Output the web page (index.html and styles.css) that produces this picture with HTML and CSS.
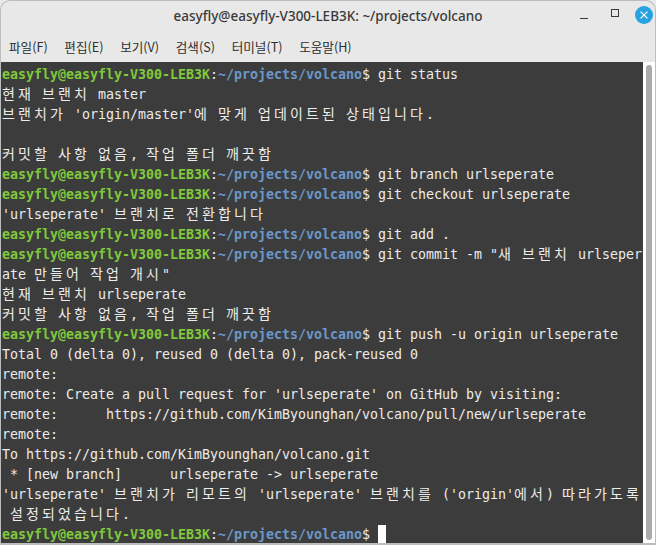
FILE: index.html
```html
<!DOCTYPE html>
<html lang="ko">
<head>
<meta charset="utf-8">
<title>Terminal</title>
<link rel="stylesheet" href="styles.css">
</head>
<body>
<div class="window">
  <header class="titlebar">
    <div class="title">easyfly@easyfly-V300-LEB3K: ~/projects/volcano</div>
    <div class="controls">
      <svg class="ctl" width="18" height="18" viewBox="0 0 18 18"><path d="M1 12.5H9" stroke="#3a3a3a" stroke-width="1" fill="none"/></svg>
      <svg class="ctl" width="18" height="18" viewBox="0 0 18 18"><rect x="4.5" y="3.5" width="7" height="7" stroke="#3a3a3a" stroke-width="1" fill="none"/></svg>
      <svg class="ctl" width="18" height="18" viewBox="0 0 18 18"><circle cx="9" cy="9" r="9" fill="#27a2e0"/><path d="M5.6 5.6L12.4 12.4M12.4 5.6L5.6 12.4" stroke="#fff" stroke-width="1.3" fill="none"/></svg>
    </div>
  </header>
  <nav class="menubar">
    <span class="menu">파일(F)</span>
    <span class="menu">편집(E)</span>
    <span class="menu">보기(V)</span>
    <span class="menu">검색(S)</span>
    <span class="menu">터미널(T)</span>
    <span class="menu">도움말(H)</span>
  </nav>
  <div class="body">
    <main class="term">
      <div class="row"><span class="u">easyfly@easyfly-V300-LEB3K</span>:<span class="d">~/projects/volcano</span>$ git status</div>
      <div class="row"><span class="k">현재</span> <span class="k">브랜치</span> master</div>
      <div class="row"><span class="k">브랜치가</span> 'origin/master'<span class="k">에</span> <span class="k">맞게</span> <span class="k">업데이트된</span> <span class="k">상태입니다</span>.</div>
      <div class="row"></div>
      <div class="row"><span class="k">커밋할</span> <span class="k">사항</span> <span class="k">없음</span>, <span class="k">작업</span> <span class="k">폴더</span> <span class="k">깨끗함</span></div>
      <div class="row"><span class="u">easyfly@easyfly-V300-LEB3K</span>:<span class="d">~/projects/volcano</span>$ git branch urlseperate</div>
      <div class="row"><span class="u">easyfly@easyfly-V300-LEB3K</span>:<span class="d">~/projects/volcano</span>$ git checkout urlseperate</div>
      <div class="row">'urlseperate' <span class="k">브랜치로</span> <span class="k">전환합니다</span></div>
      <div class="row"><span class="u">easyfly@easyfly-V300-LEB3K</span>:<span class="d">~/projects/volcano</span>$ git add .</div>
      <div class="row"><span class="u">easyfly@easyfly-V300-LEB3K</span>:<span class="d">~/projects/volcano</span>$ git commit -m "<span class="k">새</span> <span class="k">브랜치</span> urlseper</div>
      <div class="row">ate <span class="k">만들어</span> <span class="k">작업</span> <span class="k">개시</span>"</div>
      <div class="row"><span class="k">현재</span> <span class="k">브랜치</span> urlseperate</div>
      <div class="row"><span class="k">커밋할</span> <span class="k">사항</span> <span class="k">없음</span>, <span class="k">작업</span> <span class="k">폴더</span> <span class="k">깨끗함</span></div>
      <div class="row"><span class="u">easyfly@easyfly-V300-LEB3K</span>:<span class="d">~/projects/volcano</span>$ git push -u origin urlseperate</div>
      <div class="row">Total 0 (delta 0), reused 0 (delta 0), pack-reused 0</div>
      <div class="row">remote: </div>
      <div class="row">remote: Create a pull request for 'urlseperate' on GitHub by visiting:</div>
      <div class="row">remote:      https://github.com/KimByounghan/volcano/pull/new/urlseperate</div>
      <div class="row">remote: </div>
      <div class="row">To https://github.com/KimByounghan/volcano.git</div>
      <div class="row"> * [new branch]      urlseperate -&gt; urlseperate</div>
      <div class="row">'urlseperate' <span class="k">브랜치가</span> <span class="k">리모트의</span> 'urlseperate' <span class="k">브랜치를</span> ('origin'<span class="k">에서</span>) <span class="k">따라가도록</span></div>
      <div class="row"> <span class="k">설정되었습니다</span>.</div>
      <div class="row"><span class="u">easyfly@easyfly-V300-LEB3K</span>:<span class="d">~/projects/volcano</span>$ <span class="cursor"></span></div>
    </main>
    <div class="scrollbar"><div class="thumb"></div></div>
  </div>
</div>
</body>
</html>
```
FILE: styles.css
```css
* { box-sizing: border-box; }
html, body { margin: 0; height: 100%; background: #e8e8e8; }
.window {
  width: 656px; height: 545px;
  display: flex; flex-direction: column;
  background: #e8e8e8;
  border: 1px solid #bdbdbd; border-bottom-width: 2px;
  border-radius: 10px 10px 0 0;
  overflow: hidden;
}
.titlebar { height: 31px; flex: none; display: flex; align-items: center; position: relative; justify-content: center; }
.title { font: 500 13.5px "Noto Sans", sans-serif; color: #3a3a3a; margin-top: -2px; }
.controls { position: absolute; right: 2px; top: 5px; display: flex; gap: 10px; }
.ctl { display: block; }
.menubar { height: 30px; flex: none; display: flex; align-items: center; gap: 16.7px; padding-left: 8px; }
.menu { font: 12.6px "Noto Sans CJK KR", "Noto Sans", sans-serif; color: #2e2e2e; margin-top: -1px; }
.body { flex: 1; display: flex; min-height: 0; background: #fff; }
.term {
  width: 642px; flex: none; background: #3c3c3c; padding: 3px 0 0 1px;
  font: 13.3px/20px "DejaVu Sans Mono", monospace; color: #ececec; overflow: hidden;
}
.row { height: 20px; white-space: pre; letter-spacing: -0.007px; }
.u { color: #7fc93a; font-weight: 700; }
.d { color: #6b97c8; font-weight: 700; }
.k { font-family: "Noto Sans CJK KR", sans-serif; font-size: 14px; line-height: 0; letter-spacing: 3.12px; }
.cursor { display: inline-block; width: 8px; height: 20px; background: #fff; vertical-align: top; }
.scrollbar { flex: 1; padding: 3px; background: #fff; }
.thumb { width: 6px; height: 100%; background: #ababab; border-radius: 3px; }
```
